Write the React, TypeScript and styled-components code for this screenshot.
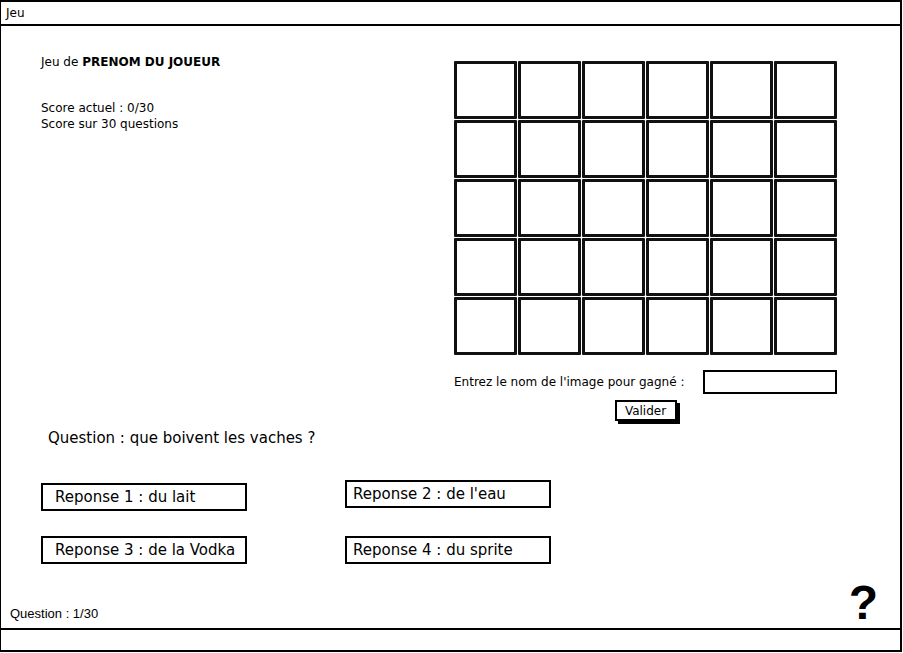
import React from "react";
import styled, { createGlobalStyle } from "styled-components";

const Global = createGlobalStyle`
  html, body { margin: 0; padding: 0; background: #fff; }
  body { width: 903px; height: 653px; overflow: hidden; }
  * { box-sizing: border-box; }
`;

const sketch = `"DejaVu Sans", "Noto Sans", sans-serif`;

const Window = styled.div`
  width: 902px;
  height: 652px;
  border: 2px solid #000;
  border-left-width: 1px;
  display: flex;
  flex-direction: column;
  font-family: ${sketch};
  color: #000;
`;

const TitleBar = styled.div`
  height: 24px;
  border-bottom: 2px solid #000;
  display: flex;
  align-items: center;
  padding-left: 5px;
  font-size: 12px;
`;

const Main = styled.div`
  flex: 1;
  display: flex;
  flex-direction: column;
`;

const TopArea = styled.div`
  display: flex;
  justify-content: space-between;
  padding: 0 63px 0 40px;
`;

const Info = styled.div`
  padding-top: 28px;
  font-size: 12px;
  line-height: 16px;
`;

const Heading = styled.div`
  margin-bottom: 30px;
  b { font-weight: 700; }
`;

const BoardColumn = styled.div`
  width: 383px;
  padding-top: 35px;
  display: flex;
  flex-direction: column;
`;

const Board = styled.div`
  display: grid;
  grid-template-columns: repeat(6, 1fr);
  grid-template-rows: repeat(5, 1fr);
  gap: 1px;
  width: 383px;
  height: 294px;
`;

const Cell = styled.div`
  border: 3px solid #111;
  border-radius: 1px;
  background: #fff;
`;

const EntryRow = styled.div`
  margin-top: 15px;
  display: flex;
  justify-content: space-between;
  align-items: center;
  font-size: 12px;
`;

const NameInput = styled.div`
  width: 134px;
  height: 24px;
  border: 2px solid #000;
  background: #fff;
`;

const ValidateButton = styled.div`
  align-self: center;
  margin-top: 6px;
  width: 62px;
  height: 21px;
  border: 2px solid #000;
  box-shadow: 3px 3px 0 #000;
  display: flex;
  align-items: center;
  justify-content: center;
  font-size: 12px;
`;

const QuestionText = styled.div`
  margin: 7px 0 0 47px;
  font-size: 15px;
  line-height: 20px;
`;

const Answers = styled.div`
  display: grid;
  grid-template-columns: 206px 206px;
  column-gap: 98px;
  row-gap: 25px;
  margin: 35px 0 0 40px;
`;

const Answer = styled.div<{ $inset: number; $lift?: number }>`
  height: 28px;
  border: 2px solid #000;
  display: flex;
  align-items: center;
  padding-left: ${(p) => p.$inset}px;
  font-size: 15px;
  transform: translateY(${(p) => -(p.$lift ?? 0)}px);
`;

const Footer = styled.div`
  flex: 1;
  display: flex;
  justify-content: space-between;
  align-items: flex-end;
  padding: 0 22px 5px 9px;
`;

const Counter = styled.div`
  font-family: "Liberation Sans", Arial, sans-serif;
  font-size: 13px;
  line-height: 16px;
  margin-bottom: 1px;
`;

const Help = styled.div`
  font-family: "Liberation Sans", Arial, sans-serif;
  font-weight: 900;
  font-size: 48px;
  line-height: 40px;
`;

const StatusBar = styled.div`
  height: 22px;
  border-top: 2px solid #000;
`;

const answers = [
  { text: "Reponse 1 : du lait", inset: 12, lift: 0 },
  { text: "Reponse 2 : de l'eau", inset: 6, lift: 3 },
  { text: "Reponse 3 : de la Vodka", inset: 12, lift: 0 },
  { text: "Reponse 4 : du sprite", inset: 6, lift: 0 },
];

export default function App() {
  const cells = Array.from({ length: 30 }, (_, i) => <Cell key={i} />);
  return (
    <>
      <Global />
      <Window>
        <TitleBar>Jeu</TitleBar>
        <Main>
          <TopArea>
            <Info>
              <Heading>
                Jeu de <b>PRENOM DU JOUEUR</b>
              </Heading>
              <div>Score actuel : 0/30</div>
              <div>Score sur 30 questions</div>
            </Info>
            <BoardColumn>
              <Board>{cells}</Board>
              <EntryRow>
                <span>Entrez le nom de l'image pour gagné :</span>
                <NameInput />
              </EntryRow>
              <ValidateButton>Valider</ValidateButton>
            </BoardColumn>
          </TopArea>
          <QuestionText>Question : que boivent les vaches ?</QuestionText>
          <Answers>
            {answers.map((a) => (
              <Answer key={a.text} $inset={a.inset} $lift={a.lift}>
                {a.text}
              </Answer>
            ))}
          </Answers>
          <Footer>
            <Counter>Question : 1/30</Counter>
            <Help>?</Help>
          </Footer>
        </Main>
        <StatusBar />
      </Window>
    </>
  );
}
